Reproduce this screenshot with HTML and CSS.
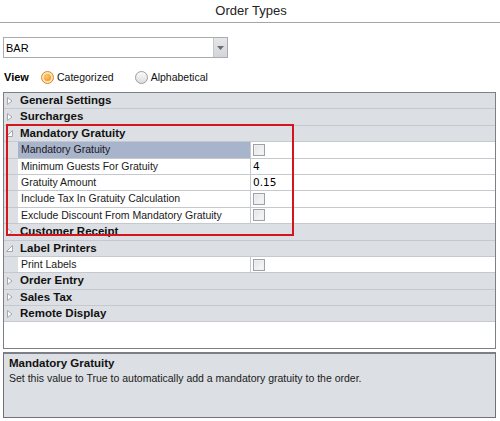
FILE: index.html
```html
<!DOCTYPE html>
<html>
<head>
<meta charset="utf-8">
<link rel="stylesheet" href="styles.css">
</head>
<body>
<div class="title">Order Types</div>
<div class="combo">
  <span class="combo-text">BAR</span>
  <span class="combo-btn"><svg width="7" height="4" viewBox="0 0 7 4"><path d="M0 0H7L3.5 4Z" fill="#6d6d6d"/></svg></span>
</div>
<div class="view-row">
  <span class="view-label">View</span>
  <span class="radio on"><span class="dot"></span></span><span class="radio-label">Categorized</span>
  <span class="radio off"></span><span class="radio-label">Alphabetical</span>
</div>
<div class="grid">
  <div class="row cat"><span class="glyph"><svg width="8" height="10" viewBox="0 0 8 10"><path d="M1.5 1.5V8.5L6 5Z" fill="#fff" stroke="#a4a7ab"/></svg></span><span class="cat-name">General Settings</span></div>
  <div class="row cat"><span class="glyph"><svg width="8" height="10" viewBox="0 0 8 10"><path d="M1.5 1.5V8.5L6 5Z" fill="#fff" stroke="#a4a7ab"/></svg></span><span class="cat-name">Surcharges</span></div>
  <div class="row cat"><span class="glyph"><svg width="8" height="10" viewBox="0 0 8 10"><path d="M6.5 2.5V8.5H0.5Z" fill="#fff" stroke="#a4a7ab"/></svg></span><span class="cat-name">Mandatory Gratuity</span></div>
  <div class="row prop"><span class="gutter"></span><span class="name sel">Mandatory Gratuity</span><span class="value"><span class="check"></span></span></div>
  <div class="row prop"><span class="gutter"></span><span class="name">Minimum Guests For Gratuity</span><span class="value">4</span></div>
  <div class="row prop"><span class="gutter"></span><span class="name">Gratuity Amount</span><span class="value">0.15</span></div>
  <div class="row prop"><span class="gutter"></span><span class="name">Include Tax In Gratuity Calculation</span><span class="value"><span class="check"></span></span></div>
  <div class="row prop"><span class="gutter"></span><span class="name">Exclude Discount From Mandatory Gratuity</span><span class="value"><span class="check"></span></span></div>
  <div class="row cat"><span class="glyph"><svg width="8" height="10" viewBox="0 0 8 10"><path d="M1.5 1.5V8.5L6 5Z" fill="#fff" stroke="#a4a7ab"/></svg></span><span class="cat-name">Customer Receipt</span></div>
  <div class="row cat"><span class="glyph"><svg width="8" height="10" viewBox="0 0 8 10"><path d="M6.5 2.5V8.5H0.5Z" fill="#fff" stroke="#a4a7ab"/></svg></span><span class="cat-name">Label Printers</span></div>
  <div class="row prop"><span class="gutter"></span><span class="name">Print Labels</span><span class="value"><span class="check"></span></span></div>
  <div class="row cat"><span class="glyph"><svg width="8" height="10" viewBox="0 0 8 10"><path d="M1.5 1.5V8.5L6 5Z" fill="#fff" stroke="#a4a7ab"/></svg></span><span class="cat-name">Order Entry</span></div>
  <div class="row cat"><span class="glyph"><svg width="8" height="10" viewBox="0 0 8 10"><path d="M1.5 1.5V8.5L6 5Z" fill="#fff" stroke="#a4a7ab"/></svg></span><span class="cat-name">Sales Tax</span></div>
  <div class="row cat"><span class="glyph"><svg width="8" height="10" viewBox="0 0 8 10"><path d="M1.5 1.5V8.5L6 5Z" fill="#fff" stroke="#a4a7ab"/></svg></span><span class="cat-name">Remote Display</span></div>
  <div class="highlight"></div>
</div>
<div class="desc">
  <div class="desc-title">Mandatory Gratuity</div>
  <div class="desc-text">Set this value to True to automatically add a mandatory gratuity to the order.</div>
</div>
</body>
</html>
```

FILE: styles.css
```css
* { box-sizing: border-box; }
body {
  margin: 0;
  background: #fff;
  font-family: "Liberation Sans", Arial, sans-serif;
  font-size: 10.5px;
  color: #000;
  width: 500px;
  height: 421px;
  overflow: hidden;
}
.title {
  height: 23px;
  line-height: 22px;
  text-align: center;
  font-size: 13px;
  color: #222;
  border-bottom: 1px solid #a5a5a5;
  padding-left: 2px;
}
.combo {
  margin: 14px 0 0 3px;
  width: 225px;
  height: 21px;
  border: 1px solid #a9abae;
  display: flex;
  align-items: center;
  background: #fff;
}
.combo-text {
  flex: 1;
  padding-left: 2px;
  font-size: 11px;
}
.combo-btn {
  width: 14px;
  height: 100%;
  background: linear-gradient(#e4e6e9, #d2d5d9);
  border-left: 1px solid #c3c6ca;
  display: flex;
  align-items: center;
  justify-content: center;
}
.view-row {
  display: flex;
  align-items: center;
  height: 16px;
  margin-top: 11px;
  padding-left: 4px;
  font-size: 10.5px;
}
.view-label {
  font-weight: bold;
  font-size: 11px;
  width: 37px;
}
.radio {
  width: 13px;
  height: 13px;
  border-radius: 50%;
  border: 1px solid #9a9da2;
  background: linear-gradient(#fafafa, #dcdcdc);
  display: flex;
  align-items: center;
  justify-content: center;
  margin-right: 3px;
}
.radio.on { border-color: #d68a2a; background: #fbe3b8; }
.radio.on .dot {
  width: 7px;
  height: 7px;
  border-radius: 50%;
  background: radial-gradient(circle at 40% 35%, #ffc870, #f08a10);
}
.radio.off { margin-left: 21px; }
.radio-label { color: #111; }
.grid {
  position: relative;
  margin: 7px 0 0 3px;
  width: 493px;
  height: 257px;
  border: 1px solid #7c8086;
  background: #fff;
}
.row {
  display: flex;
  height: 16.4px;
  align-items: stretch;
  border-bottom: 1px solid #c5c8cc;
}
.row.cat { background: #dcdfe3; }
.glyph {
  width: 16px;
  display: flex;
  align-items: center;
  padding-left: 2px;
}
.cat-name {
  font-weight: bold;
  font-size: 11.5px;
  line-height: 15px;
  color: #111;
}
.gutter { width: 14px; background: #dcdfe3; }
.name {
  width: 233px;
  padding-left: 3px;
  line-height: 15px;
  border-right: 1px solid #c5c8cc;
  color: #1a1a1a;
}
.name.sel { background: #a8b3cc; }
.value {
  flex: 1;
  padding-left: 2px;
  line-height: 15px;
  display: flex;
  align-items: center;
  font-family: "DejaVu Sans", sans-serif;
  font-size: 10.5px;
}
.check {
  width: 12px;
  height: 12px;
  border: 1px solid #9ea1a6;
  background: linear-gradient(135deg, #e2e3e5, #fafafa);
  box-shadow: inset 0 0 0 1px #f0f0f0;
}
.highlight {
  position: absolute;
  left: 2px;
  top: 31px;
  width: 288px;
  height: 112px;
  border: 2px solid #d3161e;
}
.desc {
  margin: 3px 0 0 3px;
  width: 493px;
  height: 66px;
  border: 1px solid #6f7379;
  border-top: 2px solid #7c8086;
  background: #dcdfe3;
  padding: 2px 5px;
}
.desc-title {
  font-weight: bold;
  font-size: 11.5px;
  line-height: 14px;
  color: #111;
}
.desc-text {
  line-height: 17px;
  color: #1a1a1a;
}
```
